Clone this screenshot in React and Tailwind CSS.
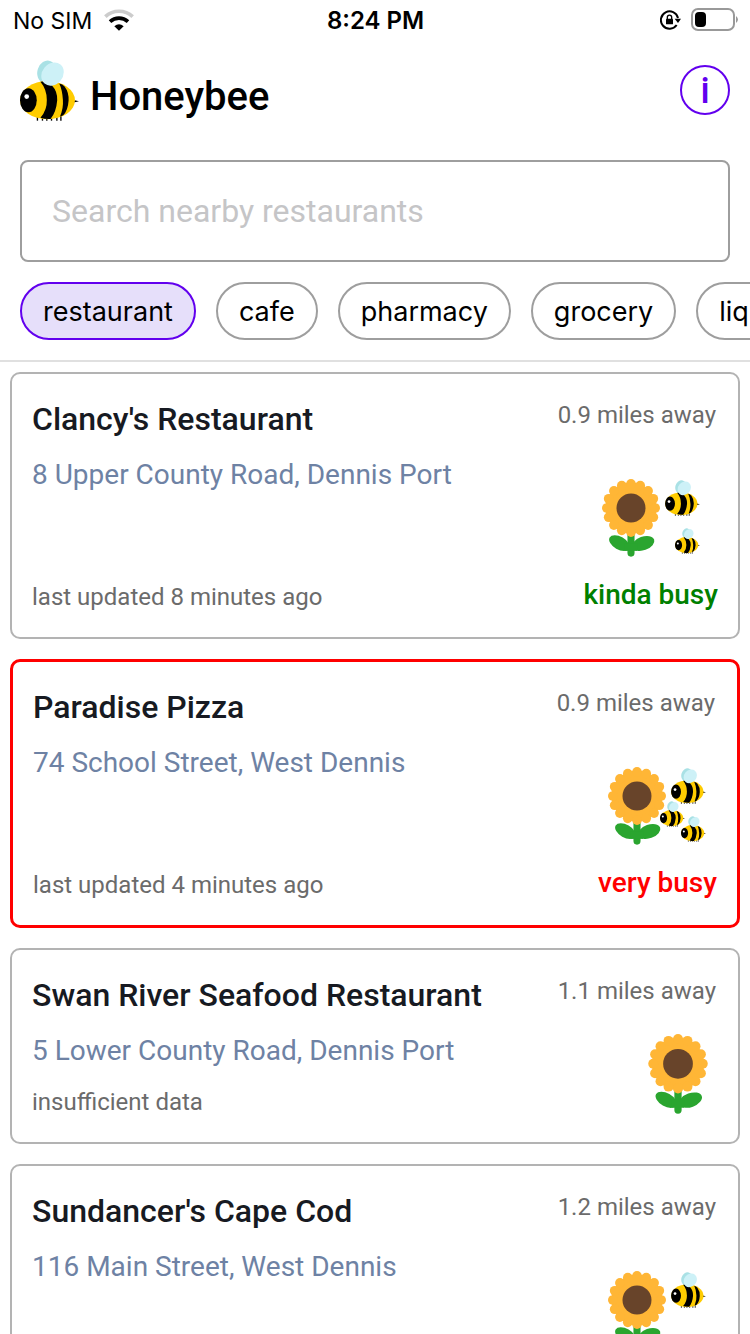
import React from "react";

const LEGS = [112, 127, 140, 154, 170, 182];

function Bee({ className }) {
  return (
    <svg viewBox="60 28 176 182" className={className} aria-hidden="true">
      <ellipse cx="139" cy="63" rx="27" ry="34" transform="rotate(18 139 63)" fill="#a9e1e5" />
      <g stroke="#000" strokeWidth="4">
        {LEGS.map((x) => (
          <line key={x} x1={x} y1="192" x2={x} y2="209" />
        ))}
      </g>
      <path d="M220 147 L236 151 L220 155 Z" fill="#000" />
      <ellipse cx="142" cy="148" rx="82" ry="57" fill="#ffcc00" />
      <ellipse cx="85" cy="148" rx="25" ry="36" fill="#000" />
      <circle cx="80" cy="137" r="7" fill="#fff" />
      <path d="M121 93 Q140 90 156 105 Q172 122 171 148 Q168 184 151 204 Q135 205 121 200 Q141 177 140 147 Q140 116 121 93 Z" fill="#000" />
      <path d="M177 98 Q187 100 193 107 Q206 124 205 149 Q203 179 189 193 L179 197 Q190 172 188 147 Q186 116 177 98 Z" fill="#000" />
      <ellipse cx="157" cy="70" rx="31" ry="37" transform="rotate(40 157 70)" fill="#cdf1f7" />
    </svg>
  );
}

const PETALS = Array.from({ length: 16 }, (_, i) => {
  const a = (i * Math.PI) / 8;
  return [144 + 75 * Math.cos(a), 131 + 75 * Math.sin(a)];
});

function Sunflower({ className }) {
  return (
    <svg viewBox="54 41 180 242" className={className} aria-hidden="true">
      <path d="M144 200 V271" stroke="#2aa52f" strokeWidth="22" strokeLinecap="round" />
      <ellipse cx="108" cy="240" rx="35" ry="20" transform="rotate(30 108 240)" fill="#2aa52f" />
      <ellipse cx="182" cy="241" rx="36" ry="21" transform="rotate(-20 182 241)" fill="#2aa52f" />
      <rect x="125" y="240" width="38" height="24" fill="#2aa52f" />
      <circle cx="144" cy="131" r="79" fill="#ffb636" />
      {PETALS.map(([x, y], i) => (
        <circle key={i} cx={x} cy={y} r="15" fill="#ffb636" />
      ))}
      <circle cx="144" cy="131" r="45" fill="#68442a" />
    </svg>
  );
}

function KindaBusyArt() {
  return (
    <div className="mr-[18px] mt-[43px] flex h-[78px] gap-[5px]">
      <Sunflower className="h-[78px] w-[58px]" />
      <div className="flex flex-col items-end gap-3 pt-px">
        <Bee className="h-[36px] w-[35px]" />
        <Bee className="h-[26px] w-[25px]" />
      </div>
    </div>
  );
}

function VeryBusyArt() {
  return (
    <div className="relative mr-[11px] mt-[43px] flex h-[78px] gap-[5px]">
      <Sunflower className="h-[78px] w-[58px]" />
      <Bee className="mt-px h-[36px] w-[35px]" />
      <Bee className="absolute bottom-[18px] right-[21px] h-[26px] w-[25px]" />
      <Bee className="absolute bottom-[3px] right-0 h-[26px] w-[25px]" />
    </div>
  );
}

function NotBusyArt() {
  return (
    <div className="mr-3 mt-[43px] flex h-[78px] gap-[5px]">
      <Sunflower className="h-[78px] w-[58px]" />
      <Bee className="mt-px h-[36px] w-[35px]" />
    </div>
  );
}

function NoDataArt() {
  return <Sunflower className="mr-2.5 mt-[22px] h-[80px] w-[60px]" />;
}

const PLACES = [
  { name: "Clancy's Restaurant", address: "8 Upper County Road, Dennis Port", distance: "0.9 miles away", updated: "last updated 8 minutes ago", status: "kinda busy", tone: "text-[#008000]", border: "border-2 border-[#b3b3b3]", Art: KindaBusyArt },
  { name: "Paradise Pizza", address: "74 School Street, West Dennis", distance: "0.9 miles away", updated: "last updated 4 minutes ago", status: "very busy", tone: "text-[#ff0000]", border: "border-3 border-[#ff0000]", Art: VeryBusyArt },
  { name: "Swan River Seafood Restaurant", address: "5 Lower County Road, Dennis Port", distance: "1.1 miles away", updated: "insufficient data", border: "border-2 border-[#b3b3b3]", Art: NoDataArt },
  { name: "Sundancer's Cape Cod", address: "116 Main Street, West Dennis", distance: "1.2 miles away", updated: "last updated 6 minutes ago", status: "not busy", tone: "text-[#008000]", border: "border-2 border-[#b3b3b3]", Art: NotBusyArt },
];

function PlaceCard({ place }) {
  const { name, address, distance, updated, status, tone, border, Art } = place;
  return (
    <li className={`flex justify-between rounded-[10px] px-5 pb-6 pt-5 ${border}`}>
      <div className="flex flex-col">
        <h2 className="text-[32px] font-medium leading-[50px] text-[#171a22]">{name}</h2>
        <p className="mt-2.5 text-[28px] leading-[42px] text-[#6e82a4]">{address}</p>
        <p className="mt-auto pt-3.5 text-[24px] leading-8 text-[#6b6b6b]">{updated}</p>
      </div>
      <div className="flex flex-col items-end">
        <p className="pr-0.5 text-[24px] leading-[42px] text-[#6b6b6b]">{distance}</p>
        <Art />
        {status && <p className={`mt-5 text-[28px] font-medium leading-9 ${tone}`}>{status}</p>}
      </div>
    </li>
  );
}

function StatusBar() {
  return (
    <div className="grid h-10 grid-cols-[1fr_auto_1fr] items-center pl-[13px] pr-3 font-['Inter',sans-serif] text-[24px]">
      <div className="flex items-center gap-3">
        <span className="pt-0.5 text-[23px]">No SIM</span>
        <svg viewBox="0 0 90 66" className="h-[22px] w-[30px]" aria-hidden="true">
          <path d="M4 23 A60 60 0 0 1 86 23" fill="none" stroke="#cccccc" strokeWidth="11" />
          <path d="M18 38 A40 40 0 0 1 72 38" fill="none" stroke="#000" strokeWidth="11" />
          <path d="M45 65 L31 52 Q45 40 59 52 Z" fill="#000" />
        </svg>
      </div>
      <div className="pt-0.5 text-center font-semibold">8:24 PM</div>
      <div className="flex items-center justify-end gap-[9px]">
        <svg viewBox="0 0 63 58" className="h-[20px] w-[21px]" aria-hidden="true">
          <path d="M54 23 A26 26 0 1 0 50 44" fill="none" stroke="#000" strokeWidth="6" />
          <path d="M44 25 H63 L54 38 Z" fill="#000" />
          <rect x="18" y="25" width="21" height="17" rx="2" fill="#000" />
          <path d="M22 26 V21 A6.500 6.500 0 0 1 35 21 V26" fill="none" stroke="#000" strokeWidth="4" />
        </svg>
        <svg viewBox="0 0 48 24" className="h-6 w-12" aria-hidden="true">
          <rect x="2" y="1" width="42" height="21" rx="6" fill="none" stroke="#999" strokeWidth="2" />
          <rect x="5" y="4" width="11" height="15" rx="4" fill="#000" />
          <path d="M46 8 Q50 11.500 46 15 Z" fill="#999" />
        </svg>
      </div>
    </div>
  );
}

const CATEGORIES = ["restaurant", "cafe", "pharmacy", "grocery", "liquor store"];

export default function App() {
  const [selected, setSelected] = React.useState("restaurant");
  return (
    <div className="min-h-screen overflow-x-hidden bg-white font-['Roboto',sans-serif] text-black">
      <StatusBar />
      <header className="flex items-start justify-between px-5 pt-5">
        <div className="flex gap-[11px]">
          <Bee className="h-[61px] w-[59px]" />
          <h1 className="pt-3 text-[40px] font-medium leading-[50px]">Honeybee</h1>
        </div>
        <button aria-label="Information" className="mt-[5px] flex size-[50px] items-center justify-center rounded-full border-2 border-[#6200ee] pt-0.5 text-[36px] font-medium leading-none text-[#6200ee]">
          i
        </button>
      </header>
      <div className="px-5 pt-[38px]">
        <input
          type="search"
          aria-label="Search nearby restaurants"
          placeholder="Search nearby restaurants"
          className="h-[102px] w-full rounded-lg border-2 border-[#9e9e9e] px-[30px] text-[32px] placeholder:text-[#c5c5c7]"
        />
      </div>
      <nav className="flex gap-5 overflow-hidden border-b-2 border-[#e0e0e0] px-5 py-5 font-['Inter',sans-serif]">
        {CATEGORIES.map((c) => (
          <button
            key={c}
            onClick={() => setSelected(c)}
            className={`h-[58px] shrink-0 rounded-full border-2 px-[21px] pt-0.5 text-[27px] ${
              c === selected ? "border-[#6200ee] bg-[#e6dffa]" : "border-[#9e9e9e] bg-white"
            }`}
          >
            {c}
          </button>
        ))}
      </nav>
      <ul className="flex flex-col gap-5 p-2.5">
        {PLACES.map((p) => (
          <PlaceCard key={p.name} place={p} />
        ))}
      </ul>
    </div>
  );
}
